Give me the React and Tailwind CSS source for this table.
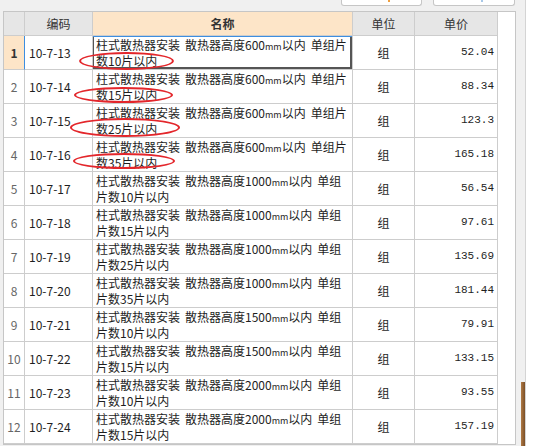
import React from 'react';

const rows = [
    { code: '10-7-13', h: '600', l2: '数10片以内', price: '52.04' },
    { code: '10-7-14', h: '600', l2: '数15片以内', price: '88.34' },
    { code: '10-7-15', h: '600', l2: '数25片以内', price: '123.3' },
    { code: '10-7-16', h: '600', l2: '数35片以内', price: '165.18' },
    { code: '10-7-17', h: '1000', l2: '片数10片以内', price: '56.54' },
    { code: '10-7-18', h: '1000', l2: '片数15片以内', price: '97.61' },
    { code: '10-7-19', h: '1000', l2: '片数25片以内', price: '135.69' },
    { code: '10-7-20', h: '1000', l2: '片数35片以内', price: '181.44' },
    { code: '10-7-21', h: '1500', l2: '片数10片以内', price: '79.91' },
    { code: '10-7-22', h: '1500', l2: '片数15片以内', price: '133.15' },
    { code: '10-7-23', h: '2000', l2: '片数10片以内', price: '93.55' },
    { code: '10-7-24', h: '2000', l2: '片数15片以内', price: '157.19' },
];

// red marker circles drawn over the first four rows
const marks = [
    'left-[-14px] top-[16px] w-[95px] h-[18px]',
    'left-[-19px] top-[17px] w-[99px] h-[16px]',
    'left-[-23px] top-[14px] w-[110px] h-[19px]',
    'left-[-20px] top-[15px] w-[102px] h-[16px]',
];

const cell = 'border-r border-b border-[#cdcdcd]';

const App = () => {
    return (
        <div className="w-[544px] h-[446px] bg-white flex overflow-hidden font-['Noto_Sans_CJK_SC',sans-serif] text-[12px] text-[#1e1e1e]">
            <div className="w-[526px] h-full bg-[#f0f0f0] border-r border-[#d4d4d4] flex flex-col">
                {/* bottoms of the toolbar buttons */}
                <div className="h-[11px] flex items-start pl-[341px] gap-[11px]">
                    <div className="w-[81px] h-[6px] bg-white border-x border-b border-[#c6c6c6] rounded-b-[3px] flex justify-center">
                        <div className="w-[2px] h-[2px] bg-[#f0a040] ml-[14px]" />
                    </div>
                    <div className="w-[82px] h-[6px] bg-white border-x border-b border-[#c6c6c6] rounded-b-[3px] flex justify-center">
                        <div className="w-[2px] h-[2px] bg-[#a8c8e8] ml-[16px]" />
                    </div>
                </div>
                <div className="flex flex-1 min-h-0">
                    <div className="ml-[3px] w-[513px] h-[434px] bg-white border border-[#c6c6c6] flex">
                        <div className="grid grid-cols-[21px_68px_260px_62px_83px] auto-rows-min content-start">
                            <div className={`${cell} h-[24px] bg-[#e6e6e6]`} />
                            <div className={`${cell} h-[24px] bg-[#e6e6e6] flex items-center justify-center text-[#333]`}>编码</div>
                            <div className={`${cell} h-[24px] bg-[#fde5c8] flex items-center justify-center font-bold text-[#333]`}>名称</div>
                            <div className={`${cell} h-[24px] bg-[#e6e6e6] flex items-center justify-center text-[#333]`}>单位</div>
                            <div className={`${cell} h-[24px] bg-[#e6e6e6] flex items-center justify-center text-[#333]`}>单价</div>

                            {rows.map((r, i) => {
                                const first = i === 0;
                                const short = r.h === '600';
                                return (
                                    <React.Fragment key={r.code}>
                                        <div
                                            className={`${cell} h-[34px] flex items-center justify-center ${
                                                first ? 'bg-[#fde5c8] font-bold text-[#333] border-r-[#3d8ee0]' : 'text-[#666]'
                                            }`}
                                        >
                                            {i + 1}
                                        </div>
                                        <div className={`${cell} h-[34px] flex items-center pl-[4px]`}>{r.code}</div>
                                        <div
                                            className={`${cell} h-[34px] relative pl-[3px] pt-[1px] leading-[16px] whitespace-nowrap ${
                                                first ? 'shadow-[inset_0_1px_0_#3d8ee0,inset_1px_0_0_#555,inset_-2px_-2px_0_#555]' : ''
                                            }`}
                                        >
                                            <div className="h-[16px]">
                                                柱式散热器安装<span className="inline-block w-[5px]"> </span>散热器高度{r.h}
                                                <span className="text-[9px] leading-[0]">mm</span>以内
                                                <span className="inline-block w-[5px]"> </span>
                                                {short ? '单组片' : '单组'}
                                            </div>
                                            <div className="h-[16px]">{r.l2}</div>
                                            {i < 4 && (
                                                <div className={`absolute ${marks[i]} border-2 border-[#e3262b] rounded-[50%]`} />
                                            )}
                                        </div>
                                        <div className={`${cell} h-[34px] flex items-center justify-center`}>组</div>
                                        <div className={`${cell} h-[34px] flex items-center justify-end pr-[3px] font-['Liberation_Mono',monospace] text-[11px]`}>
                                            {r.price}
                                        </div>
                                    </React.Fragment>
                                );
                            })}
                        </div>
                    </div>
                    <div className="flex-1 flex flex-col items-end">
                        <div className="flex-1" />
                        <div className="w-[4px] h-[64px] bg-gradient-to-r from-[#b07a45] to-[#7a4e26]" />
                    </div>
                </div>
            </div>
            <div className="flex-1" />
        </div>
    );
};

export default App;
